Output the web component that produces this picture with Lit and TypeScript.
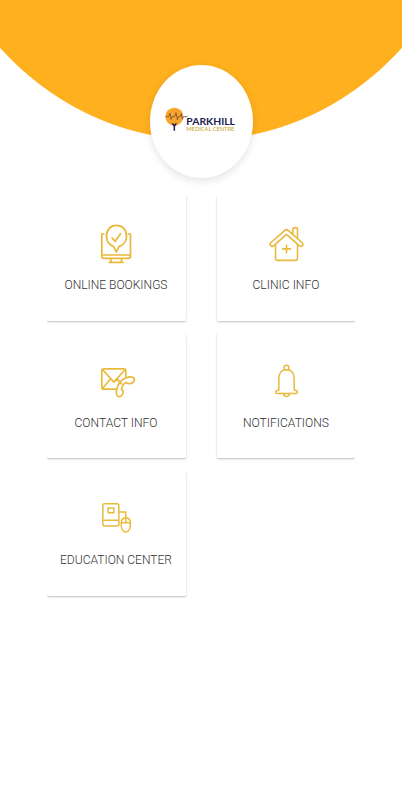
import { LitElement, html, svg, css } from "lit";
import { customElement } from "lit/decorators.js";

const tiles = [
  {
    label: "ONLINE BOOKINGS",
    width: 103,
    weight: 5.2,
    box: "-3.5 0 165 165",
    art: svg`
      <path d="M41 57H35V124Q35 130 41 130H115Q121 130 121 124V57H115M35 120H121M62 131V141M94 131V141M57 142H99"/>
      <path d="M70 94C57 90 49 79 49 64C49 44 61 31 79 31C97 31 109 44 109 64C109 79 100 91 87 94L78 111Z"/>
      <path d="M66 69L75 79L91 56"/>`,
  },
  {
    label: "CLINIC INFO",
    width: 67,
    weight: 4.8,
    box: "1.5 0 165 165",
    art: svg`
      <path d="M84 44Q81 44 78 47L36 84Q33 88 36 92Q41 96 46 92L84 58L122 92Q128 96 132 92Q135 88 132 84L90 47Q87 44 84 44Z"/>
      <path d="M51 90V130Q51 136 57 136H111Q117 136 117 130V90M103 56V43Q103 38 110 38Q117 38 117 43V69M84 90V113M72 101.500H96"/>`,
  },
  {
    label: "CONTACT INFO",
    width: 83,
    weight: 5,
    box: "-3.5 -4.5 165 165",
    art: svg`
      <path d="M77 104H41Q35 104 35 98V49Q35 43 41 43H101Q107 43 107 49V65M37 45L71 83L105 45M37 102L61 73M81 74L94 88"/>
      <path d="M108 84Q97 88 94 105Q102 111 97 120Q91 129 83 125Q77 121 79 108C82 88 94 73 113 68Q127 65 132 71Q135 78 127 85Q117 91 108 84Z"/>`,
  },
  {
    label: "NOTIFICATIONS",
    width: 86,
    weight: 4.4,
    box: "1.5 -5.5 165 165",
    art: svg`
      <path d="M61 105V72C61 54 70 45 84 45C98 45 107 54 107 72V105Q109 107 113 107Q117 109 117 112Q117 116 112 116H56Q51 116 51 112Q51 109 56 107Q60 107 61 105Z"/>
      <path d="M79 45Q77 43 77 37Q77 31 84 31Q91 31 91 37Q91 43 89 45M75 117Q77 125 84 125Q91 125 93 117"/>`,
  },
  {
    label: "EDUCATION CENTER",
    width: 112,
    weight: 4.4,
    box: "-3.5 -4 165 165",
    art: svg`
      <path d="M43 37H80Q86 37 86 43V98Q86 104 80 104H44Q38 104 38 98V42Q38 37 43 37ZM38 87H86M54 50H71V64H54ZM87 62H107V79"/>
      <path d="M107 79Q121 80 121 96C121 113 116 122 107 122C98 122 93 113 93 96Q93 80 107 79ZM93 94H121M107 80V94"/>`,
  },
];

@customElement("app-root")
export class AppRoot extends LitElement {
  static styles = css`
    :host {
      display: block;
      height: 800px;
      overflow: hidden;
      background: #fff;
      font-family: Roboto, "Liberation Sans", sans-serif;
    }
    .hero {
      display: flex;
      justify-content: center;
      height: 195px;
      box-sizing: border-box;
      padding: 65px 0 0;
      background: radial-gradient(283.4px 311.8px at 201px -171.8px, #ffb01e 99.8%, #fff 100.1%);
    }
    .badge {
      display: flex;
      align-items: center;
      justify-content: center;
      width: 103px;
      height: 113px;
      border-radius: 50%;
      background: #fff;
      box-shadow: 0 3px 8px rgba(0, 0, 0, 0.11);
    }
    .logo {
      display: block;
      width: 90px;
      height: 42px;
      margin: -4px 2px 0 0;
    }
    .brand {
      font: 700 29px Lato, sans-serif;
      fill: #221a50;
    }
    .sub {
      font: 500 17px Lato, sans-serif;
      fill: #c8a72c;
    }
    .grid {
      display: grid;
      grid-template-columns: 138.5px 138px;
      justify-content: space-between;
      grid-auto-rows: 125.5px;
      row-gap: 12.2px;
      margin: 0 47px;
      padding-bottom: 6px;
      overflow: hidden;
    }
    .card {
      display: flex;
      flex-direction: column;
      align-items: center;
      padding-top: 20px;
      box-sizing: border-box;
      background: #fff;
      border-radius: 1px;
      box-shadow: 0 1px 2px rgba(0, 0, 0, 0.25);
    }
    .icon {
      flex: none;
      width: 55px;
      height: 55px;
      fill: none;
      stroke: #e9b93c;
      stroke-linecap: round;
      stroke-linejoin: round;
    }
    .label {
      flex: none;
      width: 130px;
      height: 20px;
      margin-top: 4px;
      font-size: 13.2px;
      font-weight: 300;
      fill: #333;
      overflow: visible;
    }
  `;

  render() {
    return html`
      <header class="hero">
        <div class="badge">
          <svg class="logo" viewBox="0 0 270 126">
            <circle cx="58" cy="53" r="27" fill="#f7a52d" />
            <path d="M32 53H41L45 43L48 61L51 53H59L63 41L67 62L70 53H75L79 44L82 60L85 53H98" fill="none" stroke="#6d4438" stroke-width="2.3" />
            <path d="M58 95V81L52 73M58 81L64 73" fill="none" stroke="#221a50" stroke-width="4.5" />
            <text class="brand" x="94" y="77" textLength="146" lengthAdjust="spacingAndGlyphs">PARKHILL</text>
            <text class="sub" x="94" y="97" textLength="144" lengthAdjust="spacingAndGlyphs">MEDICAL CENTRE</text>
          </svg>
        </div>
      </header>
      <main class="grid">
        ${tiles.map(
          (t) => html`<section class="card">
            <svg class="icon" viewBox=${t.box} stroke-width=${t.weight}>${t.art}</svg>
            <svg class="label" viewBox="0 0 130 20">
              <text x="65" y="14.8" text-anchor="middle" textLength=${t.width} lengthAdjust="spacingAndGlyphs">${t.label}</text>
            </svg>
          </section>`
        )}
      </main>
    `;
  }
}
